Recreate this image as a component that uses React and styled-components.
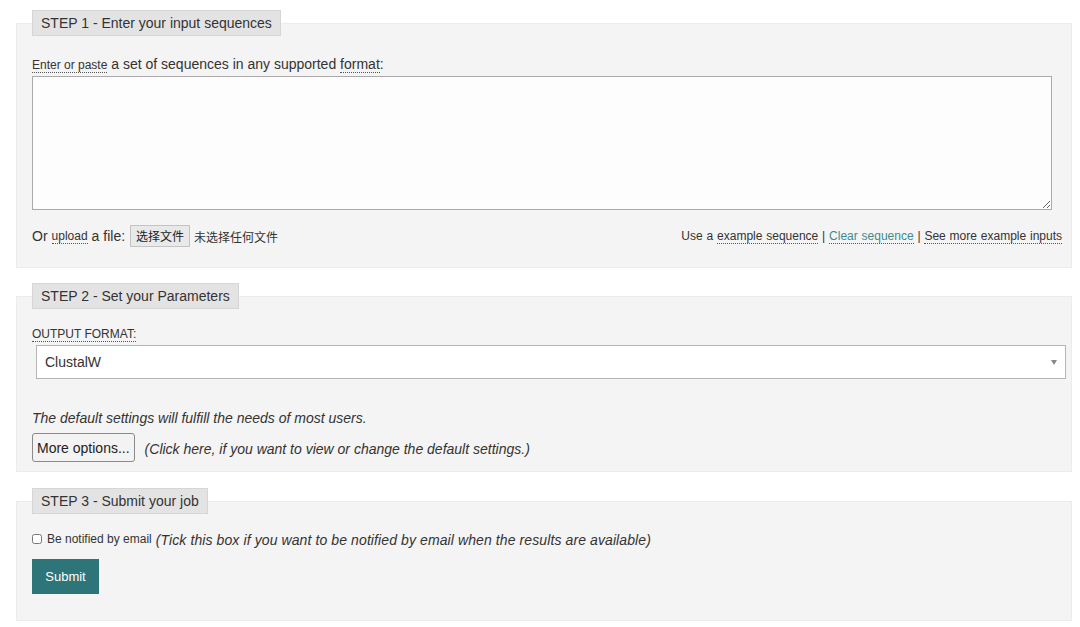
import React from 'react'
import styled, { createGlobalStyle } from 'styled-components'

const GlobalStyle = createGlobalStyle`
  body {
    margin: 0;
    background: #fff;
    font-family: "Liberation Sans", Arial, "Noto Sans CJK SC", sans-serif;
    color: #333;
  }
`

const Page = styled.div`
  padding: 10px 8px 0 16px;
`

const Fieldset = styled.fieldset`
  margin: 0 0 ${p => p.gap || 15}px;
  padding: ${p => p.pad || '20px 6px 20px 15px'};
  border: 1px solid #ececec;
  background: #f4f4f4;
  min-width: 0;
`

const Legend = styled.legend`
  padding: 0 8px;
  height: 26px;
  line-height: 25px;
  box-sizing: border-box;
  background: #e3e3e3;
  border: 1px solid #d6d6d6;
  font-size: 14px;
  color: #333;
`

const Abbr = styled.span`
  font-size: ${p => p.size || 12}px;
  border-bottom: 1px dotted #555;
  color: ${p => p.color || '#333'};
  text-transform: ${p => (p.upper ? 'uppercase' : 'none')};
  cursor: help;
`

const Label = styled.div`
  font-size: 14px;
  line-height: 16px;
  margin-bottom: 3px;
`

const TextArea = styled.textarea`
  display: block;
  box-sizing: border-box;
  width: calc(100% - 13px);
  height: 134px;
  margin: 0;
  border: 1px solid #aaa;
  background: #fdfdfd;
  font-family: "Liberation Mono", monospace;
`

const FileRow = styled.div`
  display: flex;
  align-items: center;
  justify-content: space-between;
  margin-top: 15px;
  padding-right: 3px;
`

const Upload = styled.div`
  display: flex;
  align-items: center;
  font-size: 14px;
  gap: 4px;
`

const FileButton = styled.span`
  display: inline-block;
  height: 22px;
  line-height: 20px;
  box-sizing: border-box;
  padding: 0 5px;
  margin-left: 1px;
  border: 1px solid #c3c3c3;
  background: #e9e9e9;
  font-family: "Noto Sans CJK SC", sans-serif;
  font-size: 12px;
  color: #222;
`

const NoFile = styled.span`
  font-family: "Noto Sans CJK SC", sans-serif;
  font-size: 12px;
  color: #333;
`

const Links = styled.div`
  font-size: 12px;
  color: #333;
  word-spacing: 0.5px;
`

const Small = styled.div`
  font-size: 12px;
  line-height: 14px;
  margin-bottom: 4px;
`

const SelectWrap = styled.div`
  position: relative;
  margin-left: 4px;
  &::after {
    content: '';
    position: absolute;
    right: 9px;
    top: 15px;
    border-left: 3px solid transparent;
    border-right: 3px solid transparent;
    border-top: 5px solid #888;
  }
`

const Select = styled.select`
  display: block;
  width: 100%;
  height: 34px;
  box-sizing: border-box;
  appearance: none;
  border: 1px solid #b5b5b5;
  border-radius: 0;
  background: #fff;
  padding: 0 8px;
  font-family: inherit;
  font-size: 14px;
  color: #333;
`

const Note = styled.div`
  font-size: 14px;
  font-style: italic;
  line-height: 16px;
  margin-top: 31px;
`

const OptionsRow = styled.div`
  display: flex;
  align-items: center;
  gap: 10px;
  margin-top: 7px;
`

const OptionsButton = styled.button`
  height: 29px;
  padding: 0 4px;
  border: 1px solid #8a8a8a;
  border-radius: 3px;
  background: #f3f3f3;
  font-family: inherit;
  font-size: 14px;
  color: #222;
`

const Hint = styled.span`
  font-size: 14px;
  font-style: italic;
  color: #333;
  padding-top: 3px;
  letter-spacing: ${p => (p.wide ? '0.1px' : 'normal')};
`

const CheckRow = styled.label`
  display: flex;
  align-items: center;
  gap: 4px;
  font-size: 12px;
`

const Check = styled.input`
  width: 10px;
  height: 10px;
  margin: 0 1px 0 0;
`

const SubmitButton = styled.button`
  display: block;
  margin-top: 11px;
  width: 67px;
  height: 35px;
  border: none;
  background: #2e7579;
  color: #fff;
  font-family: inherit;
  font-size: 13px;
`

export default function App() {
  return (
    <Page>
      <GlobalStyle />
      <Fieldset pad="20px 6px 20px 15px">
        <Legend>STEP 1 - Enter your input sequences</Legend>
        <Label>
          <Abbr>Enter or paste</Abbr> a set of sequences in any supported <Abbr size={14}>format</Abbr>:
        </Label>
        <TextArea />
        <FileRow>
          <Upload>
            Or <Abbr>upload</Abbr> a file: <FileButton>选择文件</FileButton> <NoFile>未选择任何文件</NoFile>
          </Upload>
          <Links>
            Use a <Abbr>example sequence</Abbr> | <Abbr color="#3f8a8e">Clear sequence</Abbr> |{' '}
            <Abbr>See more example inputs</Abbr>
          </Links>
        </FileRow>
      </Fieldset>

      <Fieldset pad="18px 5px 9px 15px" gap={16}>
        <Legend>STEP 2 - Set your Parameters</Legend>
        <Small>
          <Abbr upper>Output format:</Abbr>
        </Small>
        <SelectWrap>
          <Select defaultValue="clustalw">
            <option value="clustalw">ClustalW</option>
          </Select>
        </SelectWrap>
        <Note>The default settings will fulfill the needs of most users.</Note>
        <OptionsRow>
          <OptionsButton>More options...</OptionsButton>
          <Hint>(Click here, if you want to view or change the default settings.)</Hint>
        </OptionsRow>
      </Fieldset>

      <Fieldset pad="15px 5px 26px 15px" gap={0}>
        <Legend>STEP 3 - Submit your job</Legend>
        <CheckRow>
          <Check type="checkbox" />
          Be notified by email
          <Hint wide>(Tick this box if you want to be notified by email when the results are available)</Hint>
        </CheckRow>
        <SubmitButton>Submit</SubmitButton>
      </Fieldset>
    </Page>
  )
}
